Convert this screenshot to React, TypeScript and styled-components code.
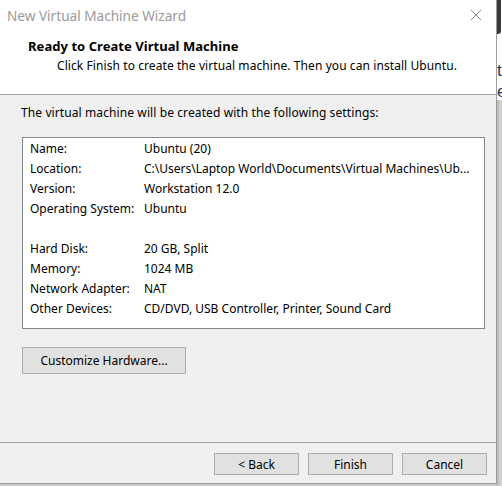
import React from "react";
import styled, { createGlobalStyle } from "styled-components";

const GlobalStyle = createGlobalStyle`
  html, body {
    margin: 0;
    padding: 0;
    width: 502px;
    height: 486px;
    overflow: hidden;
    background: #c9c9c9;
  }
  #root {
    width: 502px;
    height: 486px;
  }
`;

const UI_FONT = `"Segoe UI", "Noto Sans", "Liberation Sans", sans-serif`;

const Desktop = styled.div`
  display: flex;
  width: 502px;
  height: 486px;
  font-family: ${UI_FONT};
  color: #000;
`;

const Window = styled.div`
  width: 497px;
  height: 484px;
  display: flex;
  flex-direction: column;
  background: #f0f0f0;
  border-right: 1px solid #9c9c9c;
  border-bottom: 1px solid #9c9c9c;
  box-sizing: border-box;
  overflow: hidden;
`;

const BehindStrip = styled.div`
  flex: 1;
  display: flex;
  flex-direction: column;
  overflow: hidden;
`;

const BehindTop = styled.div`
  height: 100px;
  background: #ffffff;
  display: flex;
  flex-direction: column;
  overflow: hidden;
`;

const BehindBlob = styled.div`
  height: 38px;
  width: 4px;
  border-radius: 0 0 3px 0;
  background: #3a3a3a;
`;

const BehindGlyph = styled.span<{ $top: number }>`
  display: block;
  margin-top: ${(p) => p.$top}px;
  font-family: "Liberation Sans", sans-serif;
  font-size: 17px;
  line-height: 17px;
  color: #1f3a5a;
  white-space: nowrap;
`;

const BehindLower = styled.div`
  flex: 1;
  background: #d2d2d2;
  border-left: 2px solid #bdbdbd;
`;

const TitleBar = styled.div`
  height: 30px;
  flex: none;
  display: flex;
  align-items: center;
  justify-content: space-between;
  background: #ffffff;
  padding-left: 7px;
  padding-right: 14px;
`;

const TitleText = styled.span`
  font-size: 13.6px;
  color: #9a9a9a;
  white-space: nowrap;
`;

const CloseIcon = styled.svg`
  width: 12px;
  height: 12px;
  display: block;
`;

const Header = styled.div`
  flex: none;
  height: 65px;
  background: #ffffff;
  border-bottom: 1px solid #a0a0a0;
  display: flex;
  flex-direction: column;
  padding-left: 28px;
  padding-top: 8px;
  box-sizing: border-box;
`;

const HeaderTitle = styled.div`
  font-size: 13px;
  font-weight: 700;
  line-height: 16px;
  letter-spacing: 0.05px;
`;

const HeaderSubtitle = styled.div`
  font-size: 12px;
  line-height: 16px;
  margin-top: 4px;
  padding-left: 29px;
  letter-spacing: 0.08px;
`;

const Body = styled.div`
  flex: 1;
  display: flex;
  flex-direction: column;
  padding: 10px 12px 0 22px;
`;

const Intro = styled.div`
  font-size: 12px;
  line-height: 16px;
  margin-left: -1px;
  letter-spacing: 0.1px;
`;

const SummaryBox = styled.div`
  margin-top: 16px;
  width: 463px;
  height: 192px;
  box-sizing: border-box;
  background: #ffffff;
  border: 1px solid #828790;
  padding: 0 0 0 7px;
  display: flex;
  flex-direction: column;
`;

const Row = styled.div<{ $gapBefore?: boolean }>`
  display: grid;
  grid-template-columns: 114px 1fr;
  height: 20px;
  align-items: center;
  font-size: 12px;
  margin-top: ${(p) => (p.$gapBefore ? 20 : 0)}px;
  white-space: nowrap;
`;

const Cell = styled.span`
  overflow: hidden;
`;

const Button = styled.button<{ $width: number; $height: number }>`
  width: ${(p) => p.$width}px;
  height: ${(p) => p.$height}px;
  background: #e1e1e1;
  border: 1px solid #adadad;
  font-family: ${UI_FONT};
  font-size: 12px;
  color: #000;
  padding: 0;
  margin: 0;
`;

const CustomizeRow = styled.div`
  margin-top: 18px;
  display: flex;
`;

const Footer = styled.div`
  flex: none;
  height: 41px;
  border-top: 1px solid #a0a0a0;
  display: flex;
  justify-content: flex-end;
  align-items: flex-start;
  gap: 9px;
  padding: 10px 9px 0 0;
  box-sizing: border-box;
`;

const settings: { label: string; value: string; gapBefore?: boolean }[] = [
  { label: "Name:", value: "Ubuntu (20)" },
  {
    label: "Location:",
    value: "C:\\Users\\Laptop World\\Documents\\Virtual Machines\\Ub...",
  },
  { label: "Version:", value: "Workstation 12.0" },
  { label: "Operating System:", value: "Ubuntu" },
  { label: "Hard Disk:", value: "20 GB, Split", gapBefore: true },
  { label: "Memory:", value: "1024 MB" },
  { label: "Network Adapter:", value: "NAT" },
  { label: "Other Devices:", value: "CD/DVD, USB Controller, Printer, Sound Card" },
];

export default function App() {
  return (
    <>
      <GlobalStyle />
      <Desktop>
        <Window>
          <TitleBar>
            <TitleText>New Virtual Machine Wizard</TitleText>
            <CloseIcon viewBox="0 0 12 12">
              <path d="M1 1 L11 11 M11 1 L1 11" stroke="#8a8a8a" strokeWidth="1" fill="none" />
            </CloseIcon>
          </TitleBar>
          <Header>
            <HeaderTitle>Ready to Create Virtual Machine</HeaderTitle>
            <HeaderSubtitle>
              Click Finish to create the virtual machine. Then you can install Ubuntu.
            </HeaderSubtitle>
          </Header>
          <Body>
            <Intro>The virtual machine will be created with the following settings:</Intro>
            <SummaryBox>
              {settings.map((s) => (
                <Row key={s.label} $gapBefore={s.gapBefore}>
                  <Cell>{s.label}</Cell>
                  <Cell>{s.value}</Cell>
                </Row>
              ))}
            </SummaryBox>
            <CustomizeRow>
              <Button $width={164} $height={27}>Customize Hardware...</Button>
            </CustomizeRow>
          </Body>
          <Footer>
            <Button $width={85} $height={22}>&lt; Back</Button>
            <Button $width={85} $height={22}>Finish</Button>
            <Button $width={85} $height={22}>Cancel</Button>
          </Footer>
        </Window>
        <BehindStrip>
          <BehindTop>
            <BehindBlob />
            <BehindGlyph $top={28}>t</BehindGlyph>
            <BehindGlyph $top={4}>e</BehindGlyph>
          </BehindTop>
          <BehindLower />
        </BehindStrip>
      </Desktop>
    </>
  );
}
